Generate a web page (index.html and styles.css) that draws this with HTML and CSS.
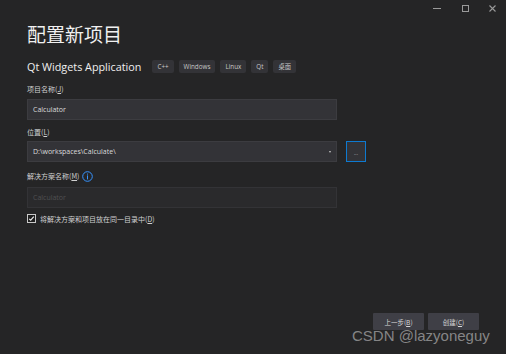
FILE: index.html
```html
<!DOCTYPE html>
<html lang="zh-CN">
<head>
    <meta charset="UTF-8">
    <meta name="viewport" content="width=device-width, initial-scale=1.0">
    <title>配置新项目</title>
    <link rel="stylesheet" href="styles.css">
</head>
<body>
    <div class="window">
        <div class="titlebar">
            <span class="ctl ctl-min"><span class="min-line"></span></span>
            <span class="ctl ctl-max"><span class="max-box"></span></span>
            <span class="ctl ctl-close">
                <svg width="7" height="7" viewBox="0 0 7 7"><path d="M0.5 0.5L6.5 6.5M6.5 0.5L0.5 6.5" stroke="#9a9a9a" stroke-width="1.1"/></svg>
            </span>
        </div>

        <div class="main">
            <h1>配置新项目</h1>
            <div class="subtitle">
                <span class="app-name">Qt Widgets Application</span>
                <span class="tags">
                    <span class="tag">C++</span>
                    <span class="tag">Windows</span>
                    <span class="tag">Linux</span>
                    <span class="tag">Qt</span>
                    <span class="tag">桌面</span>
                </span>
            </div>

            <div class="label label-first">项目名称(<u>J</u>)</div>
            <div class="input">Calculator</div>

            <div class="label label-second">位置(<u>L</u>)</div>
            <div class="row">
                <div class="input select">
                    <span>D:\workspaces\Calculate\</span>
                    <span class="arrow"></span>
                </div>
                <div class="browse">...</div>
            </div>

            <div class="label label-third">
                解决方案名称(<u>M</u>)
                <svg class="info" width="11" height="11" viewBox="0 0 11 11">
                    <circle cx="5.5" cy="5.5" r="4.8" fill="none" stroke="#3794ff" stroke-width="1"/>
                    <rect x="5" y="2.6" width="1" height="1" fill="#3794ff"/>
                    <rect x="5" y="4.4" width="1" height="4" fill="#3794ff"/>
                </svg>
            </div>
            <div class="input disabled">Calculator</div>

            <div class="check-row">
                <svg width="9" height="9" viewBox="0 0 9 9">
                    <rect x="0.5" y="0.5" width="8" height="8" fill="#1e1e1e" stroke="#c8c8c8" stroke-width="1"/>
                    <path d="M2.2 4.8L3.7 6.2L6.8 2.6" fill="none" stroke="#f0f0f0" stroke-width="1.1"/>
                </svg>
                <span>将解决方案和项目放在同一目录中(<u>D</u>)</span>
            </div>
        </div>

        <div class="footer">
            <button class="btn">上一步(<u>B</u>)</button>
            <button class="btn">创建(<u>C</u>)</button>
        </div>

        <div class="watermark">CSDN @lazyoneguy</div>
    </div>
</body>
</html>
```

FILE: styles.css
```css
body {
    margin: 0;
    padding: 0;
    background-color: #252526;
    font-family: "Open Sans", "Noto Sans CJK SC", sans-serif;
    color: #d4d4d4;
}
.window {
    position: relative;
    width: 506px;
    height: 354px;
    display: flex;
    flex-direction: column;
    overflow: hidden;
}
.titlebar {
    display: flex;
    justify-content: flex-end;
    height: 17px;
}
.ctl {
    width: 27px;
    height: 17px;
    display: flex;
    align-items: center;
    justify-content: center;
}
.min-line {
    width: 8px;
    height: 1px;
    background-color: #9a9a9a;
    margin-left: -3px;
}
.max-box {
    width: 5px;
    height: 5px;
    border: 1px solid #9a9a9a;
}
.ctl-close svg {
    display: block;
}
.main {
    padding-left: 27px;
    width: 339px;
}
h1 {
    margin: 5px 0 0 0;
    font-family: "Noto Sans CJK SC", sans-serif;
    font-size: 19px;
    font-weight: 400;
    line-height: 24px;
    color: #f0f0f0;
}
.subtitle {
    display: flex;
    align-items: center;
    margin-top: 14px;
    height: 13px;
}
.app-name {
    font-size: 10.8px;
    color: #f0f0f0;
    white-space: nowrap;
}
.tags {
    display: flex;
    gap: 5px;
    margin-left: 11px;
}
.tag {
    background-color: #333337;
    color: #c8c8c8;
    font-size: 6.3px;
    height: 13px;
    line-height: 13px;
    padding: 0 5px;
    border-radius: 2px;
    white-space: nowrap;
}
.label {
    font-family: "Noto Sans CJK SC", sans-serif;
    font-size: 7px;
    line-height: 10px;
    height: 10px;
    color: #d0d0d0;
    display: flex;
    align-items: center;
}
.label u, .check-row u, .btn u {
    text-decoration: underline;
}
.label-first {
    margin-top: 11px;
    margin-bottom: 5px;
}
.label-second {
    margin-top: 7px;
    margin-bottom: 4px;
}
.label-third {
    margin-top: 9px;
    margin-bottom: 6px;
}
.info {
    margin-left: 3px;
}
.input {
    box-sizing: border-box;
    width: 310px;
    height: 21px;
    background-color: #333337;
    border: 1px solid #3c3c40;
    padding: 0 5px;
    font-size: 7px;
    line-height: 19px;
    color: #dcdcdc;
}
.row {
    display: flex;
    gap: 9px;
}
.select {
    display: flex;
    justify-content: space-between;
    align-items: center;
}
.arrow {
    width: 0;
    height: 0;
    border-left: 1.5px solid transparent;
    border-right: 1.5px solid transparent;
    border-top: 2px solid #c8c8c8;
}
.browse {
    box-sizing: border-box;
    width: 20px;
    height: 21px;
    border: 1px solid #0e7ad0;
    background-color: #333337;
    color: #c0c0c0;
    font-size: 5px;
    line-height: 22px;
    text-align: center;
}
.disabled {
    background-color: #2a2a2c;
    border-color: #333336;
    color: #505052;
}
.check-row {
    display: flex;
    align-items: center;
    gap: 4px;
    margin-top: 5px;
    height: 11px;
    font-family: "Noto Sans CJK SC", sans-serif;
    font-size: 7px;
    color: #d0d0d0;
}
.check-row svg {
    display: block;
}
.footer {
    margin-top: auto;
    display: flex;
    justify-content: flex-end;
    gap: 4px;
    padding: 0 27px 24px 0;
}
.btn {
    width: 51px;
    height: 17px;
    padding: 0;
    border: none;
    border-radius: 1px;
    background-color: #3f3f46;
    color: #d8d8d8;
    font-family: "Noto Sans CJK SC", sans-serif;
    font-size: 6.5px;
}
.watermark {
    position: absolute;
    left: 352px;
    top: 327px;
    font-family: "Liberation Sans", Arial, sans-serif;
    font-size: 15px;
    color: rgba(200, 200, 200, 0.6);
    white-space: nowrap;
}
```
